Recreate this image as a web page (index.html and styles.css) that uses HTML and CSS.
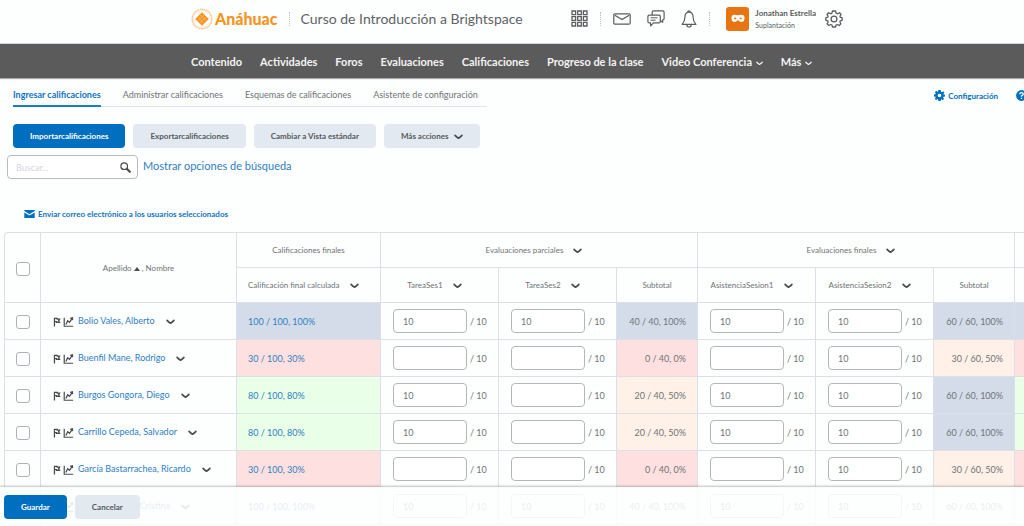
FILE: index.html
```html
<!DOCTYPE html>
<html lang="es">
<head>
    <meta charset="UTF-8">
    <meta name="viewport" content="width=device-width, initial-scale=1.0">
    <title>Ingresar calificaciones - Curso de Introducción a Brightspace</title>
    <link rel="stylesheet" href="styles.css">
</head>
<body>
    <!-- Iconos compartidos -->
    <svg class="sprite" aria-hidden="true">
        <symbol id="chevron" viewBox="0 0 10 6"><path d="M1.2 1.2 Q3 3.2 5 4.4 Q7 3.2 8.8 1.2" fill="none" stroke="currentColor" stroke-width="1.8" stroke-linecap="round" stroke-linejoin="round"/></symbol>
        <symbol id="flag" viewBox="0 0 8 11"><path d="M1.2 .8V10.4M1.2 1.4H4.2V2.4H6.8L5.8 4.2L6.8 6H3.6V5.2H1.2" fill="none" stroke="currentColor" stroke-width="1.4"/></symbol>
        <symbol id="chart" viewBox="0 0 11 11"><path d="M.8 .8V10.2H10.6" fill="none" stroke="currentColor" stroke-width="1.3"/><path d="M2.6 8.2L4.6 4.2L6.6 5.8L9.6 1.4M7.4 1.4L9.8 .9L10 3.4" fill="none" stroke="currentColor" stroke-width="1.4"/></symbol>
        <symbol id="gear" viewBox="0 0 18 18"><path d="M7.5 1H10.5L11.1 3.2L12.5 3.8L14.5 2.7L16 4.4L15 6.2L15.3 7.2L17.2 7.8V10.2L15.3 10.8L14.9 12L15.9 13.8L14.2 15.5L12.3 14.5L11.1 15L10.5 17H7.5L6.9 15L5.7 14.5L3.8 15.5L2.1 13.8L3.1 12L2.7 10.8L.8 10.2V7.8L2.7 7.2L3.1 6.2L2 4.4L3.6 2.7L5.5 3.8L6.9 3.2Z"/><circle cx="9" cy="9" r="2.9"/></symbol>
    </svg>

    <header class="header">
        <a class="logo" href="#">
            <svg width="22" height="22" viewBox="0 0 22 22" aria-hidden="true">
                <circle cx="11" cy="11" r="9.8" fill="none" stroke="#f9c48b" stroke-width="1.4" stroke-dasharray="1.4 .5"/>
                <circle cx="11" cy="11" r="8.4" fill="none" stroke="#fde3c8" stroke-width=".6"/>
                <path d="M11 4.2L17.8 11L11 17.8L4.2 11Z" fill="#f7941e"/>
                <path d="M8.7 6.5L15.5 13.3M6.5 8.7L13.3 15.5M13.3 6.5L6.5 13.3M15.5 8.7L8.7 15.5" stroke="#fcc88e" stroke-width=".5"/>
            </svg>
            <span>Anáhuac</span>
        </a>
        <span class="separator"></span>
        <a class="course" href="#">Curso de Introducción a Brightspace</a>
        <div class="tools">
            <button class="icon-btn" aria-label="Seleccionar un curso">
                <svg width="17" height="17" viewBox="0 0 17 17" fill="none" stroke="currentColor" stroke-width="1.3"><path d="M1 1h3.6v3.6H1zM6.7 1h3.6v3.6H6.7zM12.4 1H16v3.6h-3.6zM1 6.7h3.6v3.6H1zM6.7 6.7h3.6v3.6H6.7zM12.4 6.7H16v3.6h-3.6zM1 12.4h3.6V16H1zM6.7 12.4h3.6V16H6.7zM12.4 12.4H16V16h-3.6z"/></svg>
            </button>
            <span class="separator"></span>
            <button class="icon-btn" aria-label="Mensajes">
                <svg width="18" height="12" viewBox="0 0 18 12" fill="none" stroke="currentColor" stroke-width="1.2"><rect x=".8" y=".8" width="16.4" height="10.4" rx="1.2"/><path d="M1.8 2.2L9 6.6L16.2 2.2"/></svg>
            </button>
            <button class="icon-btn" aria-label="Suscripciones">
                <svg width="18" height="17" viewBox="0 0 18 17" fill="none" stroke="currentColor" stroke-width="1.2" stroke-linejoin="round"><path d="M5.2 5V2.2Q5.2.9 6.5.9H15.8Q17.1.9 17.1 2.2V8.6Q17.1 9.9 15.8 9.9L15.6 12.4L13.4 10.4"/><path d="M2.2 5.2H12Q13.3 5.2 13.3 6.5V11.6Q13.3 12.9 12 12.9H6.6L3.6 15.9V12.9H2.2Q.9 12.9.9 11.6V6.5Q.9 5.2 2.2 5.2Z"/><path d="M3.6 7.8h7M3.6 10.2h5" stroke-width="1"/></svg>
            </button>
            <button class="icon-btn" aria-label="Notificaciones">
                <svg width="16" height="18" viewBox="0 0 16 18" fill="none" stroke="currentColor" stroke-width="1.2" stroke-linejoin="round"><path d="M8 2.2C5 2.2 3.9 4.6 3.9 7.2C3.9 10.6 3 12.2 1.1 14.4H14.9C13 12.2 12.1 10.6 12.1 7.2C12.1 4.6 11 2.2 8 2.2Z"/><path d="M6.8 2.2Q6.8.8 8 .8T9.2 2.2M5.8 14.6Q6 17 8 17T10.2 14.6"/></svg>
            </button>
            <span class="separator"></span>
            <button class="user">
                <span class="avatar">
                    <svg width="14" height="9" viewBox="0 0 14 9" aria-hidden="true"><path d="M3.6.8Q5 .8 7 1.3Q9 .8 10.4.8Q13.5.8 13.5 4Q13.5 8 10.4 8Q8.4 8 7.6 6.6Q7 6 6.4 6.6Q5.6 8 3.6 8Q.5 8 .5 4Q.5.8 3.6.8Z" fill="#fff"/><ellipse cx="4.2" cy="4.4" rx="1.1" ry=".9" fill="#e87511"/><ellipse cx="9.8" cy="4.4" rx="1.1" ry=".9" fill="#e87511"/></svg>
                </span>
                <span class="user-text">
                    <span class="user-name">Jonathan Estrella</span>
                    <span class="user-role">Suplantación</span>
                </span>
            </button>
            <button class="icon-btn" aria-label="Administración">
                <svg width="18" height="18" fill="none" stroke="currentColor" stroke-width="1.3" stroke-linejoin="round"><use href="#gear"/></svg>
            </button>
        </div>
    </header>

    <nav class="navbar">
        <a href="#">Contenido</a>
        <a href="#">Actividades</a>
        <a href="#">Foros</a>
        <a href="#">Evaluaciones</a>
        <a href="#">Calificaciones</a>
        <a href="#">Progreso de la clase</a>
        <button>Video Conferencia <svg class="chevron"><use href="#chevron"/></svg></button>
        <button>Más <svg class="chevron"><use href="#chevron"/></svg></button>
    </nav>

    <main>
        <div class="top-row">
            <div class="tabs">
                <a class="active" href="#">Ingresar calificaciones</a>
                <a href="#">Administrar calificaciones</a>
                <a href="#">Esquemas de calificaciones</a>
                <a href="#">Asistente de configuración</a>
            </div>
            <div class="settings">
                <a href="#"><svg width="11" height="11" viewBox="0 0 18 18" aria-hidden="true"><path fill="#006fbf" fill-rule="evenodd" d="M7 0H11L11.5 3L13 3.6L15.3 2L17 4.4L15.3 6.5L15.6 7.2L18 7.6V10.6L15.6 11L15 12.4L16.4 14.6L14.2 16.6L12.2 15L11.4 15.4L11 18H7L6.6 15.4L5.4 14.8L3.4 16.4L1.2 14.2L2.8 12.2L2.4 11L0 10.6V7.4L2.4 7L3 5.6L1.4 3.6L3.6 1.4L5.6 3L6.6 2.8ZM9 6A3 3 0 0 0 9 12A3 3 0 0 0 9 6Z"/></svg>Configuración</a>
                <a href="#" aria-label="Ayuda"><svg width="11" height="11" viewBox="0 0 11 11" aria-hidden="true"><circle cx="5.5" cy="5.5" r="5.4" fill="#006fbf"/><path d="M3.7 4.2Q3.8 2.6 5.5 2.6T7.3 4.1Q7.3 5 5.5 6V6.7M5.5 7.8V8.9" fill="none" stroke="#fff" stroke-width="1.3"/></svg></a>
            </div>
        </div>

        <div class="actions">
            <button class="btn btn-primary">Importarcalificaciones</button>
            <button class="btn">Exportarcalificaciones</button>
            <button class="btn">Cambiar a Vista estándar</button>
            <button class="btn">Más acciones <svg class="chevron"><use href="#chevron"/></svg></button>
        </div>

        <div class="search-row">
            <div class="search">
                <input type="text" placeholder="Buscar..." aria-label="Buscar">
                <button aria-label="Buscar usuarios"><svg width="11" height="11" viewBox="0 0 11 11"><circle cx="4.2" cy="4.2" r="3.3" fill="none" stroke="currentColor" stroke-width="1.2"/><path d="M6.8 6.8L9.8 9.8" stroke="currentColor" stroke-width="2.2" stroke-linecap="round"/></svg></button>
            </div>
            <a href="#">Mostrar opciones de búsqueda</a>
        </div>

        <a class="email" href="#"><svg width="11" height="8" viewBox="0 0 11 8" aria-hidden="true"><path d="M.3 0H10.7V1L5.5 4.2L.3 1ZM.3 2.4L5.5 5.6L10.7 2.4V8H.3Z" fill="#006fbf"/></svg>Enviar correo electrónico a los usuarios seleccionados</a>

        <div class="table-wrap">
            <table class="grades">
                <colgroup>
                    <col class="col-check"><col class="col-name"><col class="col-final">
                    <col class="col-item"><col class="col-item"><col class="col-sub">
                    <col class="col-item"><col class="col-item"><col class="col-sub">
                    <col class="col-item">
                </colgroup>
                <thead>
                    <tr>
                        <th rowspan="2" class="check"><input type="checkbox" aria-label="Seleccionar todo"></th>
                        <th rowspan="2">Apellido <svg class="sort" viewBox="0 0 6 4"><path d="M3 0L6 4H0Z" fill="currentColor"/></svg> , Nombre</th>
                        <th>Calificaciones finales</th>
                        <th colspan="3">Evaluaciones parciales <svg class="chevron"><use href="#chevron"/></svg></th>
                        <th colspan="3">Evaluaciones finales <svg class="chevron"><use href="#chevron"/></svg></th>
                        <th></th>
                    </tr>
                    <tr>
                        <th class="start">Calificación final calculada <svg class="chevron"><use href="#chevron"/></svg></th>
                        <th>TareaSes1 <svg class="chevron"><use href="#chevron"/></svg></th>
                        <th>TareaSes2 <svg class="chevron"><use href="#chevron"/></svg></th>
                        <th>Subtotal</th>
                        <th>AsistenciaSesion1 <svg class="chevron"><use href="#chevron"/></svg></th>
                        <th>AsistenciaSesion2 <svg class="chevron"><use href="#chevron"/></svg></th>
                        <th>Subtotal</th>
                        <th></th>
                    </tr>
                </thead>
                <tbody>
                    <tr>
                        <td class="check"><input type="checkbox" aria-label="Seleccionar Bolio Vales, Alberto"></td>
                        <td class="name"><svg class="flag"><use href="#flag"/></svg><svg class="chart"><use href="#chart"/></svg><a href="#">Bolio Vales, Alberto</a><svg class="chevron"><use href="#chevron"/></svg></td>
                        <td class="final blue"><a href="#">100 / 100, 100%</a></td>
                        <td class="score"><label><input type="text" value="10"> / 10</label></td>
                        <td class="score"><label><input type="text" value="10"> / 10</label></td>
                        <td class="sub blue">40 / 40, 100%</td>
                        <td class="score"><label><input type="text" value="10"> / 10</label></td>
                        <td class="score"><label><input type="text" value="10"> / 10</label></td>
                        <td class="sub blue">60 / 60, 100%</td>
                        <td class="blue"></td>
                    </tr>
                    <tr>
                        <td class="check"><input type="checkbox" aria-label="Seleccionar Buenfil Mane, Rodrigo"></td>
                        <td class="name"><svg class="flag"><use href="#flag"/></svg><svg class="chart"><use href="#chart"/></svg><a href="#">Buenfil Mane, Rodrigo</a><svg class="chevron"><use href="#chevron"/></svg></td>
                        <td class="final red"><a href="#">30 / 100, 30%</a></td>
                        <td class="score"><label><input type="text" value=""> / 10</label></td>
                        <td class="score"><label><input type="text" value=""> / 10</label></td>
                        <td class="sub red">0 / 40, 0%</td>
                        <td class="score"><label><input type="text" value=""> / 10</label></td>
                        <td class="score"><label><input type="text" value="10"> / 10</label></td>
                        <td class="sub orange">30 / 60, 50%</td>
                        <td class="red"></td>
                    </tr>
                    <tr>
                        <td class="check"><input type="checkbox" aria-label="Seleccionar Burgos Gongora, Diego"></td>
                        <td class="name"><svg class="flag"><use href="#flag"/></svg><svg class="chart"><use href="#chart"/></svg><a href="#">Burgos Gongora, Diego</a><svg class="chevron"><use href="#chevron"/></svg></td>
                        <td class="final green"><a href="#">80 / 100, 80%</a></td>
                        <td class="score"><label><input type="text" value="10"> / 10</label></td>
                        <td class="score"><label><input type="text" value=""> / 10</label></td>
                        <td class="sub orange">20 / 40, 50%</td>
                        <td class="score"><label><input type="text" value="10"> / 10</label></td>
                        <td class="score"><label><input type="text" value="10"> / 10</label></td>
                        <td class="sub blue">60 / 60, 100%</td>
                        <td class="green"></td>
                    </tr>
                    <tr>
                        <td class="check"><input type="checkbox" aria-label="Seleccionar Carrillo Cepeda, Salvador"></td>
                        <td class="name"><svg class="flag"><use href="#flag"/></svg><svg class="chart"><use href="#chart"/></svg><a href="#">Carrillo Cepeda, Salvador</a><svg class="chevron"><use href="#chevron"/></svg></td>
                        <td class="final green"><a href="#">80 / 100, 80%</a></td>
                        <td class="score"><label><input type="text" value="10"> / 10</label></td>
                        <td class="score"><label><input type="text" value=""> / 10</label></td>
                        <td class="sub orange">20 / 40, 50%</td>
                        <td class="score"><label><input type="text" value="10"> / 10</label></td>
                        <td class="score"><label><input type="text" value="10"> / 10</label></td>
                        <td class="sub blue">60 / 60, 100%</td>
                        <td class="green"></td>
                    </tr>
                    <tr>
                        <td class="check"><input type="checkbox" aria-label="Seleccionar García Bastarrachea, Ricardo"></td>
                        <td class="name"><svg class="flag"><use href="#flag"/></svg><svg class="chart"><use href="#chart"/></svg><a href="#">García Bastarrachea, Ricardo</a><svg class="chevron"><use href="#chevron"/></svg></td>
                        <td class="final red"><a href="#">30 / 100, 30%</a></td>
                        <td class="score"><label><input type="text" value=""> / 10</label></td>
                        <td class="score"><label><input type="text" value=""> / 10</label></td>
                        <td class="sub red">0 / 40, 0%</td>
                        <td class="score"><label><input type="text" value=""> / 10</label></td>
                        <td class="score"><label><input type="text" value="10"> / 10</label></td>
                        <td class="sub orange">30 / 60, 50%</td>
                        <td class="red"></td>
                    </tr>
                    <tr>
                        <td class="check"><input type="checkbox" aria-label="Seleccionar Gómez Molina, Cristina"></td>
                        <td class="name"><svg class="flag"><use href="#flag"/></svg><svg class="chart"><use href="#chart"/></svg><a href="#">Gómez Molina, Cristina</a><svg class="chevron"><use href="#chevron"/></svg></td>
                        <td class="final"><a href="#">100 / 100, 100%</a></td>
                        <td class="score"><label><input type="text" value="10"> / 10</label></td>
                        <td class="score"><label><input type="text" value="10"> / 10</label></td>
                        <td class="sub">40 / 40, 100%</td>
                        <td class="score"><label><input type="text" value="10"> / 10</label></td>
                        <td class="score"><label><input type="text" value="10"> / 10</label></td>
                        <td class="sub">60 / 60, 100%</td>
                        <td></td>
                    </tr>
                </tbody>
            </table>
        </div>
    </main>

    <div class="save-bar">
        <button class="btn btn-primary">Guardar</button>
        <button class="btn">Cancelar</button>
    </div>
</body>
</html>
```
FILE: styles.css
```css
* { box-sizing: border-box; }
body { margin: 0; font-family: Lato, sans-serif; font-size: 9px; color: #6e7477; background-color: #fdfefe; overflow-x: hidden; }
a { color: #2f80c3; text-decoration: none; }
button { font-family: inherit; border: none; background: none; padding: 0; cursor: pointer; }
.sprite { display: none; }
.chevron { width: 9px; height: 6px; color: #494c4e; flex: none; }

/* Encabezado */
.header { display: flex; align-items: center; height: 44px; padding: 0 181px 6px 191px; border-bottom: 1px solid #cdd5dc; }
.logo { display: flex; align-items: center; gap: 2px; color: #f7941e; font-size: 16px; font-weight: 900; }
.separator { height: 14px; border-left: 1px dotted #b9c0c8; }
.header > .separator { margin: 0 11px; }
.course { color: #5f6366; font-size: 14px; white-space: nowrap; }
.tools { display: flex; align-items: center; gap: 16px; margin-left: auto; color: #5a5d60; }
.tools .separator { margin: 0 -4px; }
.icon-btn { display: flex; color: inherit; }
.user { display: flex; align-items: center; gap: 6px; margin-left: 4px; margin-right: -7px; text-align: left; color: #5a5d60; }
.avatar { display: flex; align-items: center; justify-content: center; width: 23px; height: 24px; border-radius: 3px; background-color: #e87511; }
.user-text { display: flex; flex-direction: column; gap: 2px; white-space: nowrap; }
.user-name { font-size: 8px; line-height: 10px; font-weight: 700; }
.user-role { font-size: 7px; line-height: 10px; }

.navbar { display: flex; align-items: center; gap: 18px; height: 34px; padding-left: 191px; background-color: #5b5b5b; box-shadow: 0 1px 1px #aaa; }
.navbar a, .navbar button { color: #f3f3f3; font-size: 11px; font-weight: 700; white-space: nowrap; }
.navbar .chevron { width: 7px; height: 5px; margin-left: 1px; color: #f3f3f3; }

/* Pestañas */
.top-row { display: flex; align-items: flex-start; padding: 7px 0 0 13px; }
.tabs { display: flex; gap: 22px; padding-right: 9px; border-bottom: 1px solid #dfe3ea; }
.tabs a { height: 22px; margin-bottom: -1px; line-height: 19px; color: #6e7477; white-space: nowrap; }
.tabs .active { border-bottom: 2px solid #1b7cc8; color: #1173c4; font-weight: 700; }
.settings { display: flex; gap: 18px; margin-left: auto; margin-right: -3px; }
.settings a { display: flex; align-items: center; gap: 3px; height: 21px; color: #006fbf; font-size: 8px; font-weight: 700; white-space: nowrap; }

.btn { height: 24px; padding: 0 17px; border-radius: 4px; background-color: #e3e9f1; color: #55595c; font-size: 8px; font-weight: 700; white-space: nowrap; }
.btn .chevron { margin-left: 4px; vertical-align: middle; }
.btn-primary { background-color: #006fbf; color: #fff; }
.actions { display: flex; gap: 8px; padding: 17px 13px 7px; }

.search-row { display: flex; align-items: flex-start; gap: 5px; padding-left: 7px; font-size: 11px; line-height: 22px; }
.search { display: flex; align-items: center; width: 131px; height: 24px; padding-right: 6px; border: 1px solid #b8bcc0; border-radius: 4px; background-color: #fff; }
.search input { flex: 1; min-width: 0; border: none; outline: none; background: none; padding: 0 8px; font-family: inherit; font-size: 9px; }
.search input::placeholder { color: #d3d7de; }
.search button { display: flex; color: #494c4e; }
.email { display: flex; align-items: center; gap: 3px; margin: 29px 0 12px 24px; line-height: 12px; font-size: 8px; font-weight: 700; color: #1173c4; }

/* Tabla de calificaciones */
.table-wrap { margin-left: 4px; overflow: hidden; }
.grades { width: 1127px; table-layout: fixed; border-collapse: separate; border-spacing: 0; border-top: 1px solid #dcdfe8; border-left: 1px solid #dcdfe8; border-radius: 4px 0 0 0; }
.grades th, .grades td { padding: 0; border-right: 1px solid #dcdfe8; border-bottom: 1px solid #dcdfe8; white-space: nowrap; }
.grades th { height: 35px; font-size: 8px; font-weight: 400; }
.grades td { height: 37px; }
.col-check { width: 36px; }
.col-name { width: 196px; }
.col-final { width: 144px; }
.col-item { width: 118px; }
.col-sub { width: 81px; }
.grades th .chevron { margin: 0 10px 0 8px; vertical-align: middle; }
.grades .start { padding-left: 11px; text-align: left; }
.sort { width: 6px; height: 4px; color: #494c4e; }
.check input { appearance: none; display: block; width: 14px; height: 14px; margin: 2px auto 0; border: 1px solid #aeb2b6; border-radius: 3px; background-color: #fff; }
.grades .name { padding-left: 12px; }
.name svg { vertical-align: middle; }
.name a { margin: 0 11px 0 4px; }
.flag { width: 8px; height: 10px; color: #494c4e; }
.chart { width: 11px; height: 10px; margin-left: 2px; color: #494c4e; }
.grades .final { padding-left: 11px; }
.grades .sub { padding-right: 11px; text-align: right; }
.grades .score { padding-left: 12px; }
.score label { display: flex; align-items: center; gap: 3px; }
.score input { width: 74px; height: 24px; padding: 0 9px; border: 1px solid #b4b7ba; border-radius: 4px; background-color: #fff; color: #6e7477; font-family: inherit; font-size: 9px; }
.blue { background-color: #d4dcea; }
.red { background-color: #ffe0e0; }
.green { background-color: #e9ffe8; }
.orange { background-color: #fff0e8; }

.save-bar { position: fixed; left: 0; right: 0; bottom: 0; display: flex; gap: 8px; height: 39px; padding: 8px 4px; background-color: rgba(253, 254, 254, 0.88); box-shadow: 0 -1px 2px rgba(73, 76, 78, 0.35); }
```
